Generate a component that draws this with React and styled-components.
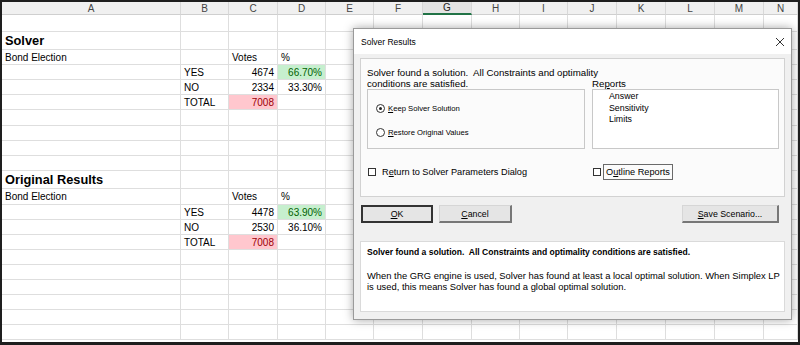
import React from 'react'
import styled, { createGlobalStyle } from 'styled-components'

const GlobalStyle = createGlobalStyle`
  html, body { margin: 0; padding: 0; background: #fff; }
  body { font-family: "Liberation Sans", Arial, sans-serif; }
  * { box-sizing: border-box; }
`

const colWidths = [179, 48, 49, 48, 48, 49, 49, 48, 48, 49, 49, 49, 49]
const colNames = ['A', 'B', 'C', 'D', 'E', 'F', 'G', 'H', 'I', 'J', 'K', 'L', 'M', 'N']

// each row: height + cells by column letter
const rows = [
  { h: 17 },
  { h: 18, A: { t: 'Solver', title: true } },
  { h: 15, A: { t: 'Bond Election' }, C: { t: 'Votes' }, D: { t: '%' } },
  { h: 15, B: { t: 'YES' }, C: { t: '4674', num: true }, D: { t: '66.70%', num: true, fill: 'good' } },
  { h: 15, B: { t: 'NO' }, C: { t: '2334', num: true }, D: { t: '33.30%', num: true } },
  { h: 15, B: { t: 'TOTAL' }, C: { t: '7008', num: true, fill: 'bad' } },
  { h: 16 },
  { h: 15 },
  { h: 15 },
  { h: 15 },
  { h: 18, A: { t: 'Original Results', title: true } },
  { h: 16, A: { t: 'Bond Election' }, C: { t: 'Votes' }, D: { t: '%' } },
  { h: 15, B: { t: 'YES' }, C: { t: '4478', num: true }, D: { t: '63.90%', num: true, fill: 'good' } },
  { h: 15, B: { t: 'NO' }, C: { t: '2530', num: true }, D: { t: '36.10%', num: true } },
  { h: 15, B: { t: 'TOTAL' }, C: { t: '7008', num: true, fill: 'bad' } },
  { h: 15 },
  { h: 15 },
  { h: 15 },
  { h: 15 },
  { h: 15 },
  { h: 15 },
]

const fills = {
  good: { bg: '#c6efce', fg: '#006100' },
  bad: { bg: '#ffc7ce', fg: '#9c0006' },
}

const Frame = styled.div`
  position: relative;
  width: 800px;
  height: 345px;
  overflow: hidden;
  border: 2px solid #1e1e1e;
  border-bottom-width: 3px;
  background: #fff;
`

const Sheet = styled.div`
  display: grid;
  grid-template-columns: ${colWidths.map(w => w + 'px').join(' ')} 1fr;
  grid-template-rows: 13px ${p => p.$rows};
`

const HeadCell = styled.div`
  display: flex;
  align-items: center;
  justify-content: center;
  background: #f0f0f0;
  color: #444;
  font-size: 10px;
  border-right: 1px solid #d8d8d8;
  border-bottom: ${p => (p.$selected ? '2px solid #217346' : '1px solid #cfcfcf')};
  ${p => p.$selected && 'background: #e4e4e4; color: #262626;'}
`

const Cell = styled.div`
  display: flex;
  align-items: center;
  justify-content: ${p => (p.$num ? 'flex-end' : 'flex-start')};
  padding: 0 3px;
  border-right: 1px solid #dedede;
  border-bottom: 1px solid #dedede;
  font-size: ${p => (p.$title ? '12.8px' : '10px')};
  font-weight: ${p => (p.$title ? 700 : 400)};
  white-space: nowrap;
  background: ${p => (p.$fill ? fills[p.$fill].bg : '#fff')};
  color: ${p => (p.$fill ? fills[p.$fill].fg : '#000')};
`

const Dialog = styled.div`
  position: absolute;
  left: 351px;
  top: 26px;
  width: 439px;
  height: 292px;
  background: #f0f0f0;
  border: 1px solid #9a9a9a;
  box-shadow: 0 0 9px rgba(0, 0, 0, 0.35);
  color: #000;
  font-size: 9.7px;
  display: flex;
  flex-direction: column;
`

const TitleBar = styled.div`
  height: 25px;
  display: flex;
  align-items: center;
  justify-content: space-between;
  padding: 0 6px 0 7px;
  background: #fff;
  font-size: 8.5px;
`

const Close = styled.svg`
  width: 10px;
  height: 10px;
`

const Body = styled.div`
  padding: 4px 6px 7px 6px;
  display: flex;
  flex-direction: column;
`

const Group = styled.div`
  height: 139px;
  border: 1px solid #d2d2d2;
  background: #fbfbfb;
  padding: 8px 5px 0 6px;
  display: grid;
  grid-template-columns: 218px 187px;
  grid-template-rows: 11px 11px 60px 31px;
  column-gap: 7px;
`

const Line = styled.div`
  line-height: 11px;
  white-space: pre;
  grid-column: ${p => (p.$wide ? '1 / -1' : 'auto')};
`

const RadioBox = styled.div`
  border: 1px solid #c8c8c8;
  padding: 12px 0 0 8px;
  display: flex;
  flex-direction: column;
  gap: 12px;
`

const Option = styled.div`
  height: 12px;
  display: flex;
  align-items: center;
  gap: 3px;
  font-size: 7.7px;
`

const Radio = styled.span`
  width: 9px;
  height: 9px;
  border-radius: 50%;
  border: 1px solid #333;
  background: #fff;
  display: flex;
  align-items: center;
  justify-content: center;
  &::after {
    content: '';
    width: 3px;
    height: 3px;
    border-radius: 50%;
    background: ${p => (p.$on ? '#222' : 'transparent')};
  }
`

const ListBox = styled.div`
  border: 1px solid #c8c8c8;
  background: #fff;
  padding: 1px 0 0 16px;
  font-size: 8.8px;
  line-height: 11.5px;
`

const Check = styled.div`
  display: flex;
  align-items: center;
  gap: ${p => p.$gap}px;
  padding-left: 1px;
  margin-top: 15px;
  height: 16px;
  font-size: 9.2px;
`

const Box = styled.span`
  width: 8px;
  height: 8px;
  border: 1px solid #333;
  background: #fff;
`

const Focus = styled.span`
  border: 1px solid #6a6a6a;
  padding: 2px 2px;
  line-height: 10px;
`

const Key = styled.span`
  text-decoration: underline;
`

const ButtonRow = styled.div`
  margin-top: 8px;
  height: 18px;
  display: flex;
  gap: 6px;
  padding: 0 6px 0 1px;
`

const Button = styled.button`
  width: ${p => p.$w}px;
  height: 18px;
  margin-left: ${p => (p.$push ? 'auto' : '0')};
  font-family: "Liberation Sans", Arial, sans-serif;
  font-size: 8.8px;
  color: #000;
  background: #e5e5e5;
  padding: 0;
  border: ${p => (p.$default ? '2px solid' : '1px solid')};
  border-color: ${p => (p.$default ? '#333' : '#d6d6d6 #777 #777 #d6d6d6')};
  border-right-width: 2px;
  border-bottom-width: 2px;
`

const Info = styled.div`
  margin-top: 18px;
  height: 71px;
  border: 1px solid #dadada;
  background: #fff;
  padding: 5px 6px 0 6px;
`

const Strong = styled.div`
  font-weight: 700;
  font-size: 8.55px;
  line-height: 11px;
  white-space: pre;
`

const Para = styled.p`
  margin: 13px 0 0 0;
  font-size: 9.4px;
  line-height: 10.5px;
  white-space: nowrap;
`

function Spreadsheet() {
  const rowTemplate = rows.map(r => r.h + 'px').join(' ')
  return (
    <Sheet $rows={rowTemplate}>
      {colNames.map(c => (
        <HeadCell key={c} $selected={c === 'G'}>{c}</HeadCell>
      ))}
      {rows.map((r, i) =>
        colNames.map(c => {
          const v = r[c]
          return (
            <Cell key={i + c} $num={v && v.num} $title={v && v.title} $fill={v && v.fill}>
              {v ? v.t : ''}
            </Cell>
          )
        })
      )}
    </Sheet>
  )
}

function SolverDialog() {
  return (
    <Dialog>
      <TitleBar>
        <span>Solver Results</span>
        <Close viewBox="0 0 10 10">
          <path d="M1 1 L9 9 M9 1 L1 9" stroke="#333" strokeWidth="1" fill="none" />
        </Close>
      </TitleBar>
      <Body>
        <Group>
          <Line $wide>Solver found a solution.  All Constraints and optimality</Line>
          <Line>conditions are satisfied.</Line>
          <Line>Re<Key>p</Key>orts</Line>
          <RadioBox>
            <Option><Radio $on /><span><Key>K</Key>eep Solver Solution</span></Option>
            <Option><Radio /><span><Key>R</Key>estore Original Values</span></Option>
          </RadioBox>
          <ListBox>
            <div>Answer</div>
            <div>Sensitivity</div>
            <div>Limits</div>
          </ListBox>
          <Check $gap={6}><Box /><span>R<Key>e</Key>turn to Solver Parameters Dialog</span></Check>
          <Check $gap={2}><Box /><Focus>O<Key>u</Key>tline Reports</Focus></Check>
        </Group>
        <ButtonRow>
          <Button $w={72} $default><Key>O</Key>K</Button>
          <Button $w={73}><Key>C</Key>ancel</Button>
          <Button $w={97} $push><Key>S</Key>ave Scenario...</Button>
        </ButtonRow>
        <Info>
          <Strong>Solver found a solution.  All Constraints and optimality conditions are satisfied.</Strong>
          <Para>
            When the GRG engine is used, Solver has found at least a local optimal solution. When Simplex LP
            <br />
            is used, this means Solver has found a global optimal solution.
          </Para>
        </Info>
      </Body>
    </Dialog>
  )
}

export default function App() {
  return (
    <>
      <GlobalStyle />
      <Frame>
        <Spreadsheet />
        <SolverDialog />
      </Frame>
    </>
  )
}
